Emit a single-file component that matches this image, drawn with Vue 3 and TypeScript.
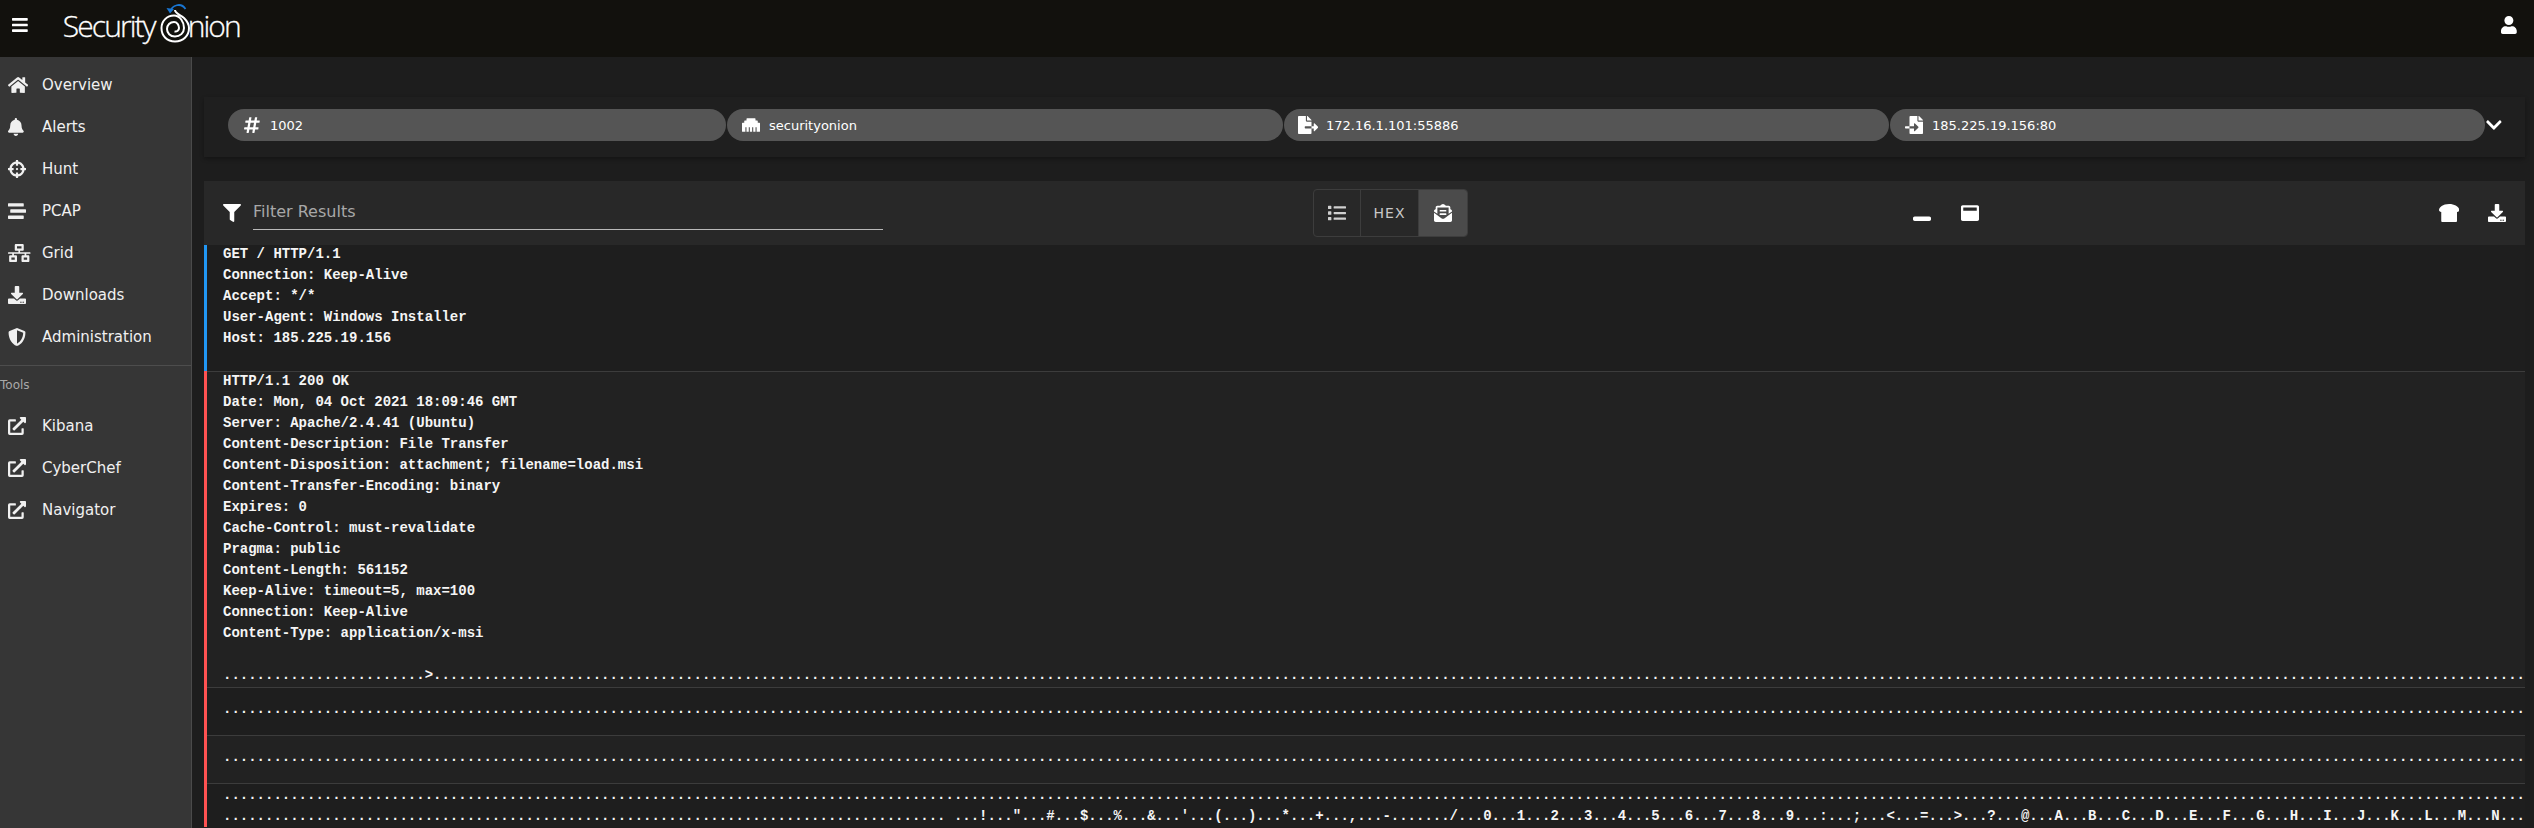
<script setup lang="ts">
type Icon = { vb: string; d: string }

const icons: Record<string, Icon> = {
  bars: { vb: '0 0 448 512', d: 'M16 132h416c8.837 0 16-7.163 16-16V76c0-8.837-7.163-16-16-16H16C7.163 60 0 67.163 0 76v40c0 8.837 7.163 16 16 16zm0 160h416c8.837 0 16-7.163 16-16v-40c0-8.837-7.163-16-16-16H16c-8.837 0-16 7.163-16 16v40c0 8.837 7.163 16 16 16zm0 160h416c8.837 0 16-7.163 16-16v-40c0-8.837-7.163-16-16-16H16c-8.837 0-16 7.163-16 16v40c0 8.837 7.163 16 16 16z' },
  user: { vb: '0 0 448 512', d: 'M224 256c70.7 0 128-57.3 128-128S294.7 0 224 0 96 57.3 96 128s57.3 128 128 128zm89.6 32h-16.7c-22.2 10.2-46.9 16-72.9 16s-50.6-5.8-72.9-16h-16.7C60.2 288 0 348.2 0 422.4V464c0 26.5 21.5 48 48 48h352c26.5 0 48-21.5 48-48v-41.6c0-74.2-60.2-134.4-134.4-134.4z' },
  home: { vb: '0 0 576 512', d: 'M280.37 148.26L96 300.11V464a16 16 0 0 0 16 16l112.06-.29a16 16 0 0 0 15.92-16V368a16 16 0 0 1 16-16h64a16 16 0 0 1 16 16v95.64a16 16 0 0 0 16 16.05L464 480a16 16 0 0 0 16-16V300L295.67 148.26a12.19 12.19 0 0 0-15.3 0zM571.6 251.47L488 182.56V44.05a12 12 0 0 0-12-12h-56a12 12 0 0 0-12 12v72.61L318.47 43a48 48 0 0 0-61 0L4.34 251.47a12 12 0 0 0-1.6 16.9l25.5 31A12 12 0 0 0 45.15 301l235.22-193.74a12.19 12.19 0 0 1 15.3 0L530.9 301a12 12 0 0 0 16.9-1.6l25.5-31a12 12 0 0 0-1.7-16.93z' },
  bell: { vb: '0 0 448 512', d: 'M224 512c35.32 0 63.97-28.65 63.97-64H160.03c0 35.35 28.65 64 63.97 64zm215.39-149.71c-19.32-20.76-55.47-51.99-55.47-154.29 0-77.7-54.48-139.9-127.94-155.16V32c0-17.67-14.32-32-31.98-32s-31.98 14.33-31.98 32v20.84C118.56 68.1 64.08 130.3 64.08 208c0 102.3-36.15 133.53-55.47 154.29-6 6.45-8.66 14.16-8.61 21.71.11 16.4 12.98 32 32.1 32h383.8c19.12 0 32-15.6 32.1-32 .05-7.55-2.61-15.27-8.61-21.71z' },
  crosshairs: { vb: '0 0 512 512', d: 'M500 224h-30.364C455.724 130.325 381.675 56.276 288 42.364V12c0-6.627-5.373-12-12-12h-40c-6.627 0-12 5.373-12 12v30.364C130.325 56.276 56.276 130.325 42.364 224H12c-6.627 0-12 5.373-12 12v40c0 6.627 5.373 12 12 12h30.364C56.276 381.675 130.325 455.724 224 469.636V500c0 6.627 5.373 12 12 12h40c6.627 0 12-5.373 12-12v-30.364C381.675 455.724 455.724 381.675 469.636 288H500c6.627 0 12-5.373 12-12v-40c0-6.627-5.373-12-12-12zM288 404.634V364c0-6.627-5.373-12-12-12h-40c-6.627 0-12 5.373-12 12v40.634C165.826 392.232 119.783 346.243 107.366 288H148c6.627 0 12-5.373 12-12v-40c0-6.627-5.373-12-12-12h-40.634C119.768 165.826 165.757 119.783 224 107.366V148c0 6.627 5.373 12 12 12h40c6.627 0 12-5.373 12-12v-40.634C346.174 119.768 392.217 165.757 404.634 224H364c-6.627 0-12 5.373-12 12v40c0 6.627 5.373 12 12 12h40.634C392.232 346.174 346.243 392.217 288 404.634zM288 256c0 17.673-14.327 32-32 32s-32-14.327-32-32c0-17.673 14.327-32 32-32s32 14.327 32 32z' },
  stream: { vb: '0 0 512 512', d: 'M16 128h416c8.84 0 16-7.16 16-16V48c0-8.84-7.16-16-16-16H16C7.16 32 0 39.16 0 48v64c0 8.84 7.16 16 16 16zm480 80H80c-8.84 0-16 7.16-16 16v64c0 8.84 7.16 16 16 16h416c8.84 0 16-7.16 16-16v-64c0-8.84-7.16-16-16-16zm-64 176H16c-8.84 0-16 7.16-16 16v64c0 8.84 7.16 16 16 16h416c8.84 0 16-7.16 16-16v-64c0-8.84-7.16-16-16-16z' },
  network: { vb: '0 0 640 512', d: 'M640 264v-16c0-8.84-7.16-16-16-16H344v-40h72c17.67 0 32-14.33 32-32V32c0-17.67-14.33-32-32-32H224c-17.67 0-32 14.33-32 32v128c0 17.67 14.33 32 32 32h72v40H16c-8.84 0-16 7.16-16 16v16c0 8.84 7.16 16 16 16h104v40H64c-17.67 0-32 14.33-32 32v128c0 17.67 14.33 32 32 32h160c17.67 0 32-14.33 32-32V352c0-17.67-14.33-32-32-32h-56v-40h304v40h-56c-17.67 0-32 14.33-32 32v128c0 17.67 14.33 32 32 32h160c17.67 0 32-14.33 32-32V352c0-17.67-14.33-32-32-32h-56v-40h104c8.84 0 16-7.16 16-16zM256 128V64h128v64H256zm-64 320H96v-64h96v64zm352 0h-96v-64h96v64z' },
  download: { vb: '0 0 512 512', d: 'M216 0h80c13.3 0 24 10.7 24 24v168h87.7c17.8 0 26.7 21.5 14.1 34.1L269.7 378.3c-7.5 7.5-19.8 7.5-27.3 0L90.1 226.1c-12.6-12.6-3.7-34.1 14.1-34.1H192V24c0-13.3 10.7-24 24-24zm296 376v112c0 13.3-10.7 24-24 24H24c-13.3 0-24-10.7-24-24V376c0-13.3 10.7-24 24-24h146.7l49 49c20.1 20.1 52.5 20.1 72.6 0l49-49H488c13.3 0 24 10.7 24 24zm-124 88c0-11-9-20-20-20s-20 9-20 20 9 20 20 20 20-9 20-20zm64 0c0-11-9-20-20-20s-20 9-20 20 9 20 20 20 20-9 20-20z' },
  shield: { vb: '0 0 512 512', d: 'M466.5 83.7l-192-80a48.15 48.15 0 0 0-36.9 0l-192 80C27.7 91.1 16 108.6 16 128c0 198.5 114.5 335.7 221.5 380.3 11.8 4.9 25.1 4.9 36.9 0C360.1 472.6 496 349.3 496 128c0-19.4-11.7-36.9-29.5-44.3zM256.1 446.3l-.1-381 175.9 73.3c-3.3 151.4-82.1 261.1-175.8 307.7z' },
  external: { vb: '0 0 512 512', d: 'M432,320H400a16,16,0,0,0-16,16V448H64V128H208a16,16,0,0,0,16-16V80a16,16,0,0,0-16-16H48A48,48,0,0,0,0,112V464a48,48,0,0,0,48,48H400a48,48,0,0,0,48-48V336A16,16,0,0,0,432,320ZM488,0h-128c-21.37,0-32.05,25.91-17,41l35.73,35.73L135,320.37a24,24,0,0,0,0,34L157.67,377a24,24,0,0,0,34,0L435.28,133.32,471,169c15,15,41,4.5,41-17V24A24,24,0,0,0,488,0Z' },
  filter: { vb: '0 0 512 512', d: 'M487.976 0H24.028C2.71 0-8.047 25.866 7.058 40.971L192 225.941V432c0 7.831 3.821 15.17 10.237 19.662l80 55.98C298.02 518.69 320 507.493 320 487.98V225.941l184.947-184.97C520.021 25.896 509.338 0 487.976 0z' },
  hashtag: { vb: '0 0 448 512', d: 'M440.667 182.109l7.143-40c1.313-7.355-4.342-14.109-11.813-14.109h-74.81l14.623-81.891C377.123 38.754 371.468 32 363.997 32h-40.632a12 12 0 0 0-11.813 9.891L296.175 128H197.54l14.623-81.891C213.477 38.754 207.822 32 200.35 32h-40.632a12 12 0 0 0-11.813 9.891L132.528 128H53.432a12 12 0 0 0-11.813 9.891l-7.143 40C33.163 185.246 38.818 192 46.289 192h74.81L98.242 320H19.146a12 12 0 0 0-11.813 9.891l-7.143 40C-1.123 377.246 4.532 384 12.003 384h74.81L72.19 465.891C70.877 473.246 76.532 480 84.003 480h40.632a12 12 0 0 0 11.813-9.891L151.826 384h98.634l-14.623 81.891C234.523 473.246 240.178 480 247.65 480h40.632a12 12 0 0 0 11.813-9.891L315.472 384h79.096a12 12 0 0 0 11.813-9.891l7.143-40c1.313-7.355-4.342-14.109-11.813-14.109h-74.81l22.857-128h79.096a12 12 0 0 0 11.813-9.891zM261.889 320h-98.634l22.857-128h98.634l-22.857 128z' },
  ethernet: { vb: '0 0 512 512', d: 'M496 192h-48v-48c0-8.8-7.2-16-16-16h-48V80c0-8.8-7.2-16-16-16H144c-8.8 0-16 7.2-16 16v48H80c-8.8 0-16 7.2-16 16v48H16c-8.8 0-16 7.2-16 16v224c0 8.8 7.2 16 16 16h80V320h32v128h64V320h32v128h64V320h32v128h64V320h32v128h80c8.8 0 16-7.2 16-16V208c0-8.8-7.2-16-16-16z' },
  fileExport: { vb: '0 0 576 512', d: 'M384 121.9c0-6.3-2.5-12.4-7-16.9L279.1 7c-4.5-4.5-10.6-7-17-7H256v128h128zM571 308l-95.7-96.4c-10.1-10.1-27.4-3-27.4 11.3V288h-64v64h64v65.2c0 14.3 17.3 21.4 27.4 11.3L571 332c6.6-6.6 6.6-17.4 0-24zm-379 28v-32c0-8.8 7.2-16 16-16h176V160H248c-13.2 0-24-10.8-24-24V0H24C10.7 0 0 10.7 0 24v464c0 13.3 10.7 24 24 24h336c13.3 0 24-10.7 24-24V352H208c-8.8 0-16-7.2-16-16z' },
  fileImport: { vb: '0 0 512 512', d: 'M16 288c-8.8 0-16 7.2-16 16v32c0 8.8 7.2 16 16 16h112v-64zm489-183L407.1 7c-4.5-4.5-10.6-7-17-7H384v128h128v-6.1c0-6.3-2.5-12.4-7-16.9zm-153 31V0H152c-13.3 0-24 10.7-24 24v264h128v-65.2c0-14.3 17.3-21.4 27.4-11.3L379 308c6.6 6.7 6.6 17.4 0 24l-95.7 96.4c-10.1 10.1-27.4 3-27.4-11.3V352H128v136c0 13.3 10.7 24 24 24h336c13.3 0 24-10.7 24-24V160H376c-13.2 0-24-10.8-24-24z' },
  list: { vb: '0 0 512 512', d: 'M80 368H16a16 16 0 0 0-16 16v64a16 16 0 0 0 16 16h64a16 16 0 0 0 16-16v-64a16 16 0 0 0-16-16zm0-320H16A16 16 0 0 0 0 64v64a16 16 0 0 0 16 16h64a16 16 0 0 0 16-16V64a16 16 0 0 0-16-16zm0 160H16a16 16 0 0 0-16 16v64a16 16 0 0 0 16 16h64a16 16 0 0 0 16-16v-64a16 16 0 0 0-16-16zm416 176H176a16 16 0 0 0-16 16v32a16 16 0 0 0 16 16h320a16 16 0 0 0 16-16v-32a16 16 0 0 0-16-16zm0-320H176a16 16 0 0 0-16 16v32a16 16 0 0 0 16 16h320a16 16 0 0 0 16-16V80a16 16 0 0 0-16-16zm0 160H176a16 16 0 0 0-16 16v32a16 16 0 0 0 16 16h320a16 16 0 0 0 16-16v-32a16 16 0 0 0-16-16z' },
  envelope: { vb: '0 0 512 512', d: 'M176 216h160c8.84 0 16-7.16 16-16v-16c0-8.84-7.16-16-16-16H176c-8.84 0-16 7.16-16 16v16c0 8.84 7.16 16 16 16zm-16 80c0 8.84 7.16 16 16 16h160c8.84 0 16-7.16 16-16v-16c0-8.84-7.16-16-16-16H176c-8.84 0-16 7.16-16 16v16zm96 121.13c-16.42 0-32.84-5.06-46.86-15.19L0 250.86V464c0 26.51 21.49 48 48 48h416c26.51 0 48-21.49 48-48V250.86L302.86 401.94c-14.02 10.12-30.44 15.19-46.86 15.19zm237.61-254.18c-8.85-6.94-17.24-13.47-29.61-22.81V96c0-26.51-21.49-48-48-48h-77.55c-3.04-2.2-5.87-4.26-9.04-6.56C312.6 29.17 279.2-.35 256 0c-23.2-.35-56.59 29.17-73.41 41.44-3.17 2.3-6 4.36-9.04 6.56H96c-26.51 0-48 21.49-48 48v44.14c-12.37 9.33-20.76 15.87-29.61 22.81A47.995 47.995 0 0 0 0 200.72v10.65l96 69.35V96h320v184.72l96-69.35v-10.65c0-14.74-6.78-28.67-18.39-37.77z' },
  winMin: { vb: '0 0 512 512', d: 'M464 352H48c-26.5 0-48 21.5-48 48v32c0 26.5 21.5 48 48 48h416c26.5 0 48-21.5 48-48v-32c0-26.5-21.5-48-48-48z' },
  winMax: { vb: '0 0 512 512', d: 'M464 32H48C21.5 32 0 53.5 0 80v352c0 26.5 21.5 48 48 48h416c26.5 0 48-21.5 48-48V80c0-26.5-21.5-48-48-48zm-16 160H64v-84c0-6.6 5.4-12 12-12h360c6.6 0 12 5.4 12 12v84z' },
  bread: { vb: '0 0 576 512', d: 'M288 0C108 0 0 93.4 0 169.14 0 199.44 24.24 224 64 224v256c0 17.67 16.12 32 36 32h376c19.88 0 36-14.33 36-32V224c39.76 0 64-24.56 64-54.86C576 93.4 468 0 288 0z' },
  chevron: { vb: '0 0 448 512', d: 'M207.029 381.476L12.686 187.132c-9.373-9.373-9.373-24.569 0-33.941l22.667-22.667c9.357-9.357 24.522-9.375 33.901-.04L224 284.505l154.745-154.021c9.379-9.335 24.544-9.317 33.901.04l22.667 22.667c9.373 9.373 9.373 24.569 0 33.941L240.971 381.476c-9.373 9.372-24.569 9.372-33.942 0z' },
}

const mainNav = [
  { label: 'Overview', icon: icons.home },
  { label: 'Alerts', icon: icons.bell },
  { label: 'Hunt', icon: icons.crosshairs },
  { label: 'PCAP', icon: icons.stream },
  { label: 'Grid', icon: icons.network },
  { label: 'Downloads', icon: icons.download },
  { label: 'Administration', icon: icons.shield },
]
const tools = ['Kibana', 'CyberChef', 'Navigator']

const chips = [
  { label: '1002', icon: icons.hashtag, width: '498px' },
  { label: 'securityonion', icon: icons.ethernet, width: '556px' },
  { label: '172.16.1.101:55886', icon: icons.fileExport, width: '605px' },
  { label: '185.225.19.156:80', icon: icons.fileImport, width: '595px' },
]

const COLS = 274

const request = [
  'GET / HTTP/1.1',
  'Connection: Keep-Alive',
  'Accept: */*',
  'User-Agent: Windows Installer',
  'Host: 185.225.19.156',
  '',
].join('\n')

const dots = '.'.repeat(COLS)

let ascii = ''
for (let c = 32; c < 127; c++) ascii += String.fromCharCode(c) + '...'

const response = [
  'HTTP/1.1 200 OK',
  'Date: Mon, 04 Oct 2021 18:09:46 GMT',
  'Server: Apache/2.4.41 (Ubuntu)',
  'Content-Description: File Transfer',
  'Content-Disposition: attachment; filename=load.msi',
  'Content-Transfer-Encoding: binary',
  'Expires: 0',
  'Cache-Control: must-revalidate',
  'Pragma: public',
  'Content-Length: 561152',
  'Keep-Alive: timeout=5, max=100',
  'Connection: Keep-Alive',
  'Content-Type: application/x-msi',
  '',
  ('.'.repeat(24) + '>' + dots).slice(0, COLS),
].join('\n')

const lastRow = dots + '\n' + ('.'.repeat(86) + ascii).slice(0, COLS)
</script>

<template>
  <div class="app">
    <header class="topbar">
      <svg class="ico bars" :viewBox="icons.bars.vb"><path :d="icons.bars.d" /></svg>
      <div class="logo">
        <span class="logo-text">Security</span>
        <svg class="logo-mark" viewBox="160 0 34 46">
          <path d="M171 12 C173 5 182 2 186.5 9" fill="none" stroke="#1976d2" stroke-width="1.8" />
          <path d="M167.5 8 L171 13.5 L175 9 Z" fill="#1976d2" />
          <path d="M176 10 C176 13 181 15 185 18 C188 21 190 24 190 28 C190 36 184 41.5 176 41.5 C168 41.5 162.5 36 162.5 28 C162.5 21 168 15.5 175 15.5 C181 15.5 185 22 185 28 C185 33 181 36.5 176 36.5 C171 36.5 168 33 168 29 C168 25 171 22 175 22 C178 22 180 25 180 28 C180 30 178 32 175.5 31.5" fill="none" stroke="#fff" stroke-width="2" />
        </svg>
        <span class="logo-text nion">nion</span>
      </div>
      <svg class="ico user" :viewBox="icons.user.vb"><path :d="icons.user.d" /></svg>
    </header>

    <div class="body">
      <nav class="sidebar">
        <a v-for="item in mainNav" :key="item.label" class="nav-item">
          <span class="nav-icon"><svg class="ico" :viewBox="item.icon.vb"><path :d="item.icon.d" /></svg></span>
          <span>{{ item.label }}</span>
        </a>
        <hr class="divider" />
        <div class="subheader">Tools</div>
        <a v-for="tool in tools" :key="tool" class="nav-item">
          <span class="nav-icon"><svg class="ico" :viewBox="icons.external.vb"><path :d="icons.external.d" /></svg></span>
          <span>{{ tool }}</span>
        </a>
      </nav>

      <main class="main">
        <section class="chip-card">
          <div v-for="chip in chips" :key="chip.label" class="chip" :style="{ width: chip.width }">
            <span class="chip-icon"><svg class="ico" :viewBox="chip.icon.vb"><path :d="chip.icon.d" /></svg></span>
            <span>{{ chip.label }}</span>
          </div>
          <svg class="ico chevron" :viewBox="icons.chevron.vb"><path :d="icons.chevron.d" /></svg>
        </section>

        <section class="toolbar">
          <div class="filter">
            <svg class="ico filter-icon" :viewBox="icons.filter.vb"><path :d="icons.filter.d" /></svg>
            <div class="filter-input">Filter Results</div>
          </div>
          <div class="toggle">
            <button class="toggle-btn"><svg class="ico" :viewBox="icons.list.vb"><path :d="icons.list.d" /></svg></button>
            <button class="toggle-btn hex">HEX</button>
            <button class="toggle-btn active"><svg class="ico" :viewBox="icons.envelope.vb"><path :d="icons.envelope.d" /></svg></button>
          </div>
          <div class="win-btns">
            <svg class="ico" :viewBox="icons.winMin.vb"><path :d="icons.winMin.d" /></svg>
            <svg class="ico" :viewBox="icons.winMax.vb"><path :d="icons.winMax.d" /></svg>
          </div>
          <div class="end-btns">
            <svg class="ico" :viewBox="icons.bread.vb"><path :d="icons.bread.d" /></svg>
            <svg class="ico" :viewBox="icons.download.vb"><path :d="icons.download.d" /></svg>
          </div>
        </section>

        <section class="stream">
          <pre class="row blue first">{{ request }}</pre>
          <pre class="row red alt lined tail">{{ response }}</pre>
          <pre class="row red lined pad">{{ dots }}</pre>
          <pre class="row red alt lined pad">{{ dots }}</pre>
          <pre class="row red lined last">{{ lastRow }}</pre>
        </section>
      </main>
    </div>
  </div>
</template>

<style>
html,
body {
  margin: 0;
  background: #1e1e1e;
  overflow: hidden;
}
</style>

<style scoped>
.app {
  width: 2534px;
  height: 828px;
  display: flex;
  flex-direction: column;
  overflow: hidden;
  background: #1d1d1d;
  color: #fff;
  font-family: "DejaVu Sans", sans-serif;
}
.ico {
  display: block;
  height: 18px;
  fill: currentColor;
  flex: none;
}
.topbar {
  height: 57px;
  flex: none;
  display: flex;
  align-items: center;
  background: #12110d;
  padding: 0 17px 7px 12px;
  box-sizing: border-box;
}
.bars {
  width: 15.75px;
}
.logo {
  display: flex;
  align-items: flex-start;
  align-self: flex-start;
  margin-left: 35px;
  height: 46px;
}
.logo-text {
  font-family: "Open Sans", sans-serif;
  font-weight: 300;
  font-size: 30px;
  letter-spacing: -1.9px;
  color: #fff;
  line-height: 30px;
  margin-top: 11px;
  -webkit-text-stroke: 0.3px #fff;
}
.logo-text.nion {
  margin-left: -5px;
}
.logo-mark {
  width: 34px;
  height: 46px;
  flex: none;
  margin-left: 4px;
}
.user {
  margin-left: auto;
  width: 15.75px;
}
.body {
  flex: 1;
  display: flex;
  min-height: 0;
}
.sidebar {
  width: 192px;
  flex: none;
  box-sizing: border-box;
  background: #363636;
  border-right: 1px solid #4a4a4a;
  padding-top: 7px;
  color: #f0f0f0;
  font-size: 15px;
}
.nav-item {
  height: 42px;
  display: flex;
  align-items: center;
  padding-left: 8px;
}
.nav-icon {
  width: 34px;
  flex: none;
}
.divider {
  border: 0;
  border-top: 1px solid #4d4d4d;
  margin: 7px 0 0;
}
.subheader {
  height: 39px;
  line-height: 38px;
  font-size: 12px;
  color: #a9a9a9;
}
.main {
  flex: 1;
  min-width: 0;
  padding: 40px 9px 0 12px;
  display: flex;
  flex-direction: column;
}
.chip-card {
  height: 60px;
  flex: none;
  box-sizing: border-box;
  display: flex;
  align-items: flex-start;
  padding: 12px 0 0 24px;
  gap: 1px;
  background: #1f1f1f;
  box-shadow: 0 2px 4px rgba(0, 0, 0, 0.3);
}
.chip {
  height: 32px;
  flex: none;
  box-sizing: border-box;
  border-radius: 16px;
  background: #555555;
  display: flex;
  align-items: center;
  padding-left: 15px;
  font-size: 13px;
  color: #fff;
}
.chip-icon {
  width: 18px;
  margin-right: 9px;
  display: flex;
  justify-content: center;
  flex: none;
}
.chevron {
  margin-top: 7px;
  width: 15.75px;
}
.toolbar {
  margin-top: 24px;
  margin-bottom: -1px;
  height: 64px;
  flex: none;
  background: #282828;
  position: relative;
  z-index: 1;
  display: flex;
  align-items: center;
}
.filter {
  width: 1109px;
  flex: none;
  display: flex;
  align-items: flex-start;
  padding-left: 19px;
  box-sizing: border-box;
  margin-top: 1px;
}
.filter-icon {
  margin-top: 7px;
}
.filter-input {
  width: 630px;
  margin-left: 12px;
  height: 33px;
  line-height: 30px;
  box-sizing: border-box;
  border-bottom: 1px solid #b9b9b9;
  font-size: 16px;
  color: #a8a8a8;
}
.toggle {
  display: flex;
  height: 48px;
  box-sizing: border-box;
  border: 1px solid #3d3d3d;
  border-radius: 4px;
  overflow: hidden;
}
.toggle-btn {
  border: 0;
  background: transparent;
  padding: 0;
  display: flex;
  align-items: center;
  justify-content: center;
  color: #d0d0d0;
  font-family: inherit;
  border-right: 1px solid #3d3d3d;
  width: 47px;
}
.toggle-btn.hex {
  width: 58px;
  font-size: 14px;
  letter-spacing: 1px;
  color: #c8c8c8;
}
.toggle-btn.active {
  width: 48px;
  border-right: 0;
  background: #4b4b4b;
  color: #fff;
}
.win-btns {
  display: flex;
  gap: 30px;
  margin-left: 445px;
}
.end-btns {
  display: flex;
  gap: 29px;
  margin-left: auto;
  margin-right: 19px;
}
.stream {
  flex: 1;
  min-height: 0;
  overflow: hidden;
}
.row {
  margin: 0;
  padding: 0 0 0 16px;
  font-family: "Liberation Mono", monospace;
  font-weight: 700;
  font-size: 14px;
  line-height: 21px;
  color: #f5f5f5;
  white-space: pre;
  box-sizing: border-box;
  background: #1e1e1e;
}
.row.alt {
  background: #222222;
}
.row.lined {
  box-shadow: inset 0 1px 0 #3c3c3c;
}
.row.blue {
  border-left: 3px solid #2196f3;
}
.row.red {
  border-left: 3px solid #ff5252;
}
.row.first {
  height: 127px;
}
.row.tail {
  height: 316px;
}
.row.pad {
  padding-top: 12px;
  height: 48px;
}
.row.last {
  padding-top: 2px;
}
</style>
